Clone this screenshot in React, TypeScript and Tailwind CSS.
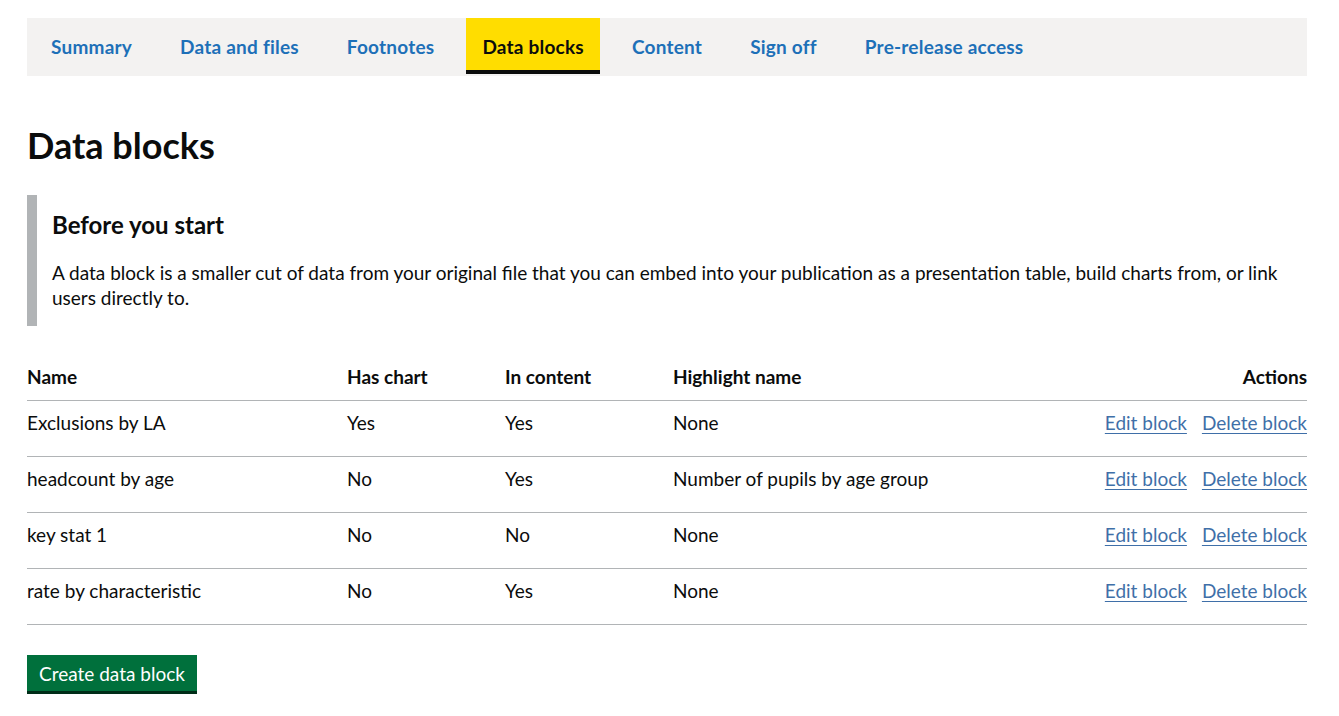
import React from 'react';

const tabs = ['Summary', 'Data and files', 'Footnotes', 'Data blocks', 'Content', 'Sign off', 'Pre-release access'];

const rows = [
  { name: 'Exclusions by LA', chart: 'Yes', content: 'Yes', highlight: 'None' },
  { name: 'headcount by age', chart: 'No', content: 'Yes', highlight: 'Number of pupils by age group' },
  { name: 'key stat 1', chart: 'No', content: 'No', highlight: 'None' },
  { name: 'rate by characteristic', chart: 'No', content: 'Yes', highlight: 'None' },
];

const App: React.FC = () => {
  return (
    <div className="min-h-screen bg-white text-[#0b0c0c] font-['Lato',sans-serif]">
      <div className="ml-[27px] w-[1280px] pt-[18px] pb-6">
        {/* Tab navigation */}
        <nav className="flex gap-4 bg-[#f3f2f1] pl-2 pb-[2px]">
          {tabs.map((tab) => {
            const active = tab === 'Data blocks';
            return (
              <a
                key={tab}
                href="#"
                className={`px-4 pt-[16px] pb-[11px] border-b-4 text-[19px] leading-[25px] font-bold tracking-[0.22px] ${
                  active ? 'bg-[#ffdd00] border-[#0b0c0c] text-[#0b0c0c]' : 'border-transparent text-[#1d70b8]'
                }`}
              >
                {tab}
              </a>
            );
          })}
        </nav>

        <h1 className="mt-[49px] text-[36px] leading-[40px] font-bold">Data blocks</h1>

        {/* Inset text */}
        <div className="mt-[30px] border-l-[10px] border-[#b1b4b6] pl-[15px] pt-[15px] pb-[16px]">
          <h2 className="text-[24px] leading-[30px] font-bold">Before you start</h2>
          <p className="mt-[20px] text-[19px] leading-[25px] pr-4">
            A data block is a smaller cut of data from your original file that you can embed into your publication as a
            presentation table, build charts from, or link users directly to.
          </p>
        </div>

        <table className="mt-[28px] w-full border-collapse text-[19px] leading-[25px]">
          <thead>
            <tr className="border-b border-[#b1b4b6] text-left">
              <th className="w-[320px] pt-[10px] pb-[11px] font-bold">Name</th>
              <th className="w-[158px] pt-[10px] pb-[11px] font-bold">Has chart</th>
              <th className="w-[168px] pt-[10px] pb-[11px] font-bold">In content</th>
              <th className="pt-[10px] pb-[11px] font-bold">Highlight name</th>
              <th className="pt-[10px] pb-[11px] font-bold text-right">Actions</th>
            </tr>
          </thead>
          <tbody>
            {rows.map((row) => (
              <tr key={row.name} className="border-b border-[#b1b4b6]">
                <td className="pt-[9px] pb-[21px] align-top">{row.name}</td>
                <td className="pt-[9px] pb-[21px] align-top">{row.chart}</td>
                <td className="pt-[9px] pb-[21px] align-top">{row.content}</td>
                <td className="pt-[9px] pb-[21px] align-top">{row.highlight}</td>
                <td className="pt-[9px] pb-[21px] align-top text-right whitespace-nowrap">
                  <a href="#" className="text-[#3f6fa8] underline underline-offset-[3px] decoration-1">
                    Edit block
                  </a>
                  <a href="#" className="ml-[15px] text-[#3f6fa8] underline underline-offset-[3px] decoration-1">
                    Delete block
                  </a>
                </td>
              </tr>
            ))}
          </tbody>
        </table>

        <button className="mt-[30px] bg-[#00703c] text-white text-[19px] leading-[25px] px-3 pt-[6px] pb-[5px] shadow-[0_3px_0_#002d18]">
          Create data block
        </button>
      </div>
    </div>
  );
};

export default App;
